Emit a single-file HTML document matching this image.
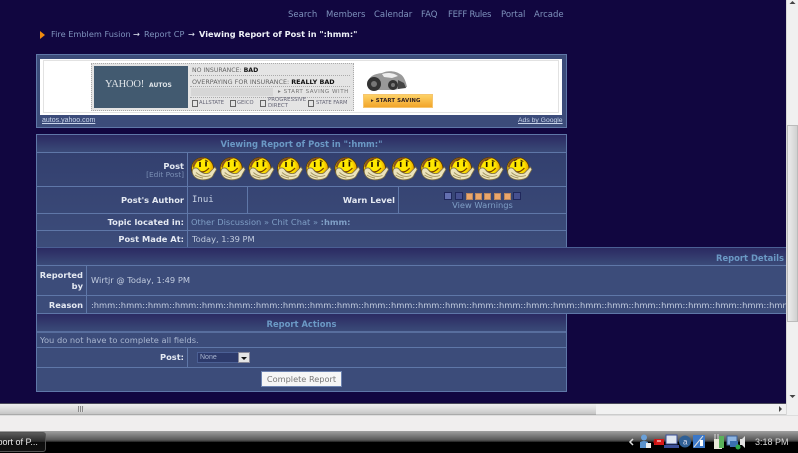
<!DOCTYPE html>
<html><head><meta charset="utf-8">
<style>
html,body{margin:0;padding:0;width:798px;height:453px;overflow:hidden;background:#110640}
body{position:relative;font-family:"DejaVu Sans","Liberation Sans",sans-serif;font-size:8px;color:#c9d3e6}
div{position:absolute;white-space:nowrap;box-sizing:border-box}
.nav{top:10px;font-size:8.500px;color:#7f93bd;line-height:11px}
.bc{top:29px;font-size:8.200px;color:#7f93bd;line-height:11px}
.band{background:linear-gradient(#2b2a62,#3a4a78)}
.cell{background:linear-gradient(#33406f,#3c4c7a)}
.line{background:#5f77a8}
.lab{font-weight:bold;color:#e4e9f2;text-align:right;font-size:8.300px;line-height:11px}
.txt{line-height:11px;font-size:8.300px;color:#c3cde0}
.link{color:#7f9fc6}
.pip{width:7px;height:7px;background:#eba66a;border:1px solid #b9875e;top:193px}
.pb{width:8px;height:8px;background:#46508f;border:1px solid #20285c;top:192px}
.ad{font-size:6.200px;color:#666;line-height:8px}
.sm{font-size:5.200px;color:#667;line-height:7px}
.box{width:6px;height:7px;border:1px solid #666;top:100px}
</style></head>
<body>
<svg width="0" height="0" style="position:absolute"><defs>
<radialGradient id="g" cx=".45" cy=".4" r=".6"><stop offset=".55" stop-color="#ffe800"/><stop offset=".9" stop-color="#e8a400"/><stop offset="1" stop-color="#b87000"/></radialGradient>
<symbol id="s" viewBox="0 0 26 24">
<circle cx="11.500" cy="11.500" r="11" fill="url(#g)" stroke="#5c3c00" stroke-width=".8"/>
<path d="M1.500 10C2 4 7 .5 13 .6 16 1 12 2 8 3.500 5 5 4 8 3 11Z" fill="#8a5420"/>
<path d="M9 5v5M15 4.500v5" stroke="#1a1000" stroke-width="1.600"/>
<path d="M7.500 4l3-1.500M14 3l3 1.500" stroke="#4a2c00" stroke-width=".9"/>
<path d="M8 13C10 16 14 15.500 18 11" fill="none" stroke="#7a4000" stroke-width="1.300"/>
<path d="M1.500 13C3 10 6.500 10.500 8 13 10 16 15 17.500 18 16L24 10 25.500 12.500 22.500 17.500C21.500 22 14 23.500 9 22.500 3.500 21.500 .5 17 1.500 13Z" fill="#ece3bb" stroke="#7d7048" stroke-width=".8"/>
<path d="M5 15.500C9 19 14 20.500 19.500 18.500M4 18C7 20 9 20.500 12 21" fill="none" stroke="#a0925e" stroke-width=".9"/>
</symbol></defs></svg>

<!-- top nav -->
<div class="nav" style="left:288px">Search</div>
<div class="nav" style="left:326px">Members</div>
<div class="nav" style="left:374px">Calendar</div>
<div class="nav" style="left:421px">FAQ</div>
<div class="nav" style="left:448px;letter-spacing:-.25px">FEFF Rules</div>
<div class="nav" style="left:501px">Portal</div>
<div class="nav" style="left:534px">Arcade</div>

<!-- breadcrumb -->
<svg style="position:absolute;left:40px;top:30px" width="6" height="10"><path d="M0 1l5 4-5 4z" fill="#f08a10"/></svg>
<div class="bc" style="left:51px">Fire Emblem Fusion</div>
<div class="bc" style="left:133px;color:#dfe5f0">→</div>
<div class="bc" style="left:144px">Report CP</div>
<div class="bc" style="left:188px;color:#dfe5f0">→</div>
<div class="bc" style="left:199px;color:#eef1f7;font-weight:bold">Viewing Report of Post in ":hmm:"</div>

<!-- ad box -->
<div style="left:36px;top:54px;width:531px;height:74px;background:#3c4c7a;border:1px solid #5f77a8"></div>
<div style="left:40px;top:59px;width:522px;height:56px;background:#fff"></div>
<div style="left:43px;top:60px;width:516px;height:53px;border:1px solid #e2e2e2"></div>
<div style="left:91px;top:63px;width:263px;height:48px;background:#e4e4e4;border:1px dotted #aaa"></div>
<div style="left:94px;top:66px;width:94px;height:42px;background:#425a70"></div>
<div style="left:105px;top:79px;font-family:'Liberation Serif',serif;font-size:10.500px;line-height:12px;color:#dfe4e8;letter-spacing:-.2px">YAHOO!</div>
<div style="left:149px;top:82px;font-size:6px;line-height:8px;font-weight:bold;color:#dfe4e8">AUTOS</div>
<div class="ad" style="left:192px;top:67px">NO INSURANCE: <b style="color:#111">BAD</b></div>
<div style="left:190px;top:75px;width:160px;height:1px;border-top:1px dotted #aaa"></div>
<div class="ad" style="left:192px;top:78px;font-size:6.400px">OVERPAYING FOR INSURANCE: <b style="color:#111">REALLY BAD</b></div>
<div style="left:190px;top:86px;width:160px;height:1px;border-top:1px dotted #aaa"></div>
<div style="left:191px;top:88px;width:82px;height:8px;background:#d6d6d6"></div>
<div class="sm" style="left:278px;top:89px;letter-spacing:.5px;font-size:5.600px;color:#777">▸ START SAVING WITH</div>
<div style="left:190px;top:97px;width:160px;height:1px;border-top:1px dotted #aaa"></div>
<div class="box" style="left:192px"></div>
<div class="sm" style="left:199px;top:100px">ALLSTATE</div>
<div class="box" style="left:230px"></div>
<div class="sm" style="left:237px;top:100px">GEICO</div>
<div class="box" style="left:260px"></div>
<div class="sm" style="left:268px;top:98px;line-height:5.500px;font-size:5.400px">PROGRESSIVE<br>DIRECT</div>
<div class="box" style="left:308px"></div>
<div class="sm" style="left:316px;top:100px">STATE FARM</div>
<svg style="position:absolute;left:364px;top:68px" width="44" height="24">
<path d="M4 15C5 8 10 6 18 5 24 2 32 3 36 6 40 8 42 14 43 19L30 22H8Z" fill="#999"/>
<path d="M18 6C24 4 30 5 34 8L28 10 20 9Z" fill="#eee"/>
<circle cx="10" cy="16" r="7" fill="#333"/><circle cx="10" cy="16" r="3" fill="#777"/>
<circle cx="29" cy="17" r="5" fill="#333"/><circle cx="29" cy="17" r="2" fill="#777"/>
<path d="M34 12l6 3 2 5-8 1z" fill="#444"/></svg>
<div style="left:363px;top:94px;width:70px;height:14px;background:linear-gradient(#fdd267,#f2a52b);border:1px solid #f6c56f"></div>
<div class="ad" style="left:371px;top:97px;font-weight:bold;color:#322;letter-spacing:.1px;font-size:5.400px">▸ START SAVING</div>
<div style="left:42px;top:116px;font-size:7px;line-height:10px;color:#c8d4ea;text-decoration:underline;font-family:'Liberation Sans',sans-serif">autos.yahoo.com</div>
<div style="left:518px;top:116px;font-size:6.800px;line-height:10px;color:#c8d4ea;text-decoration:underline;font-family:'Liberation Sans',sans-serif">Ads by Google</div>

<!-- main table frame -->
<div style="left:36px;top:134px;width:531px;height:258px;background:#3c4c7a;border:1px solid #5f77a8"></div>
<div class="band" style="left:37px;top:135px;width:529px;height:17px"></div>
<div style="left:37px;top:138px;width:529px;text-align:center;font-weight:bold;font-size:8.400px;line-height:12px;color:#6b99c5">Viewing Report of Post in ":hmm:"</div>
<div class="cell" style="left:37px;top:153px;width:529px;height:94px"></div>
<div class="line" style="left:37px;top:152px;width:529px;height:1px"></div>
<div class="line" style="left:37px;top:186px;width:529px;height:1px"></div>
<div class="line" style="left:37px;top:213px;width:529px;height:1px"></div>
<div class="line" style="left:37px;top:230px;width:529px;height:1px"></div>
<div class="line" style="left:37px;top:247px;width:529px;height:1px"></div>
<div class="line" style="left:187px;top:153px;width:1px;height:95px"></div>
<div class="line" style="left:247px;top:186px;width:1px;height:27px"></div>
<div class="line" style="left:398px;top:186px;width:1px;height:27px"></div>

<div class="lab" style="left:100px;width:84px;top:161px">Post</div>
<div style="left:100px;width:84px;top:170px;text-align:right;font-size:7.400px;line-height:9px;color:#7b8fb5">[Edit Post]</div>
<svg style="position:absolute;left:191px;top:157px" width="346" height="26">
<use href="#s" x="0" width="26" height="24"/><use href="#s" x="28.700" width="26" height="24"/><use href="#s" x="57.400" width="26" height="24"/><use href="#s" x="86" width="26" height="24"/><use href="#s" x="114.700" width="26" height="24"/><use href="#s" x="143.400" width="26" height="24"/><use href="#s" x="172" width="26" height="24"/><use href="#s" x="200.700" width="26" height="24"/><use href="#s" x="229.400" width="26" height="24"/><use href="#s" x="258" width="26" height="24"/><use href="#s" x="286.700" width="26" height="24"/><use href="#s" x="315.400" width="26" height="24"/>
</svg>

<div class="lab" style="left:100px;width:84px;top:195px">Post's Author</div>
<div style="left:192px;top:195px;line-height:11px;font-size:9px;font-family:'DejaVu Sans Mono',monospace;color:#c9d3e6">Inui</div>
<div class="lab" style="left:300px;width:95px;top:195px">Warn Level</div>
<div class="pb" style="left:444px;background:#6470b0"></div>
<div class="pb" style="left:455px"></div>
<div class="pip" style="left:466px"></div><div class="pip" style="left:475px"></div><div class="pip" style="left:484px"></div><div class="pip" style="left:494px"></div><div class="pip" style="left:504px"></div>
<div class="pb" style="left:513px"></div>
<div style="left:399px;width:167px;top:200px;text-align:center;line-height:11px;font-size:8.300px;color:#7f9fc6">View Warnings</div>

<div class="lab" style="left:100px;width:84px;top:217px">Topic located in:</div>
<div class="txt link" style="left:191px;top:217px">Other Discussion » Chit Chat » <b>:hmm:</b></div>
<div class="lab" style="left:100px;width:84px;top:234px">Post Made At:</div>
<div class="txt" style="left:192px;top:234px">Today, 1:39 PM</div>

<!-- report details -->
<div style="left:36px;top:247px;width:750px;height:67px;background:#3c4c7a;border-top:1px solid #4b5f94;border-left:1px solid #5f77a8"></div>
<div class="band" style="left:37px;top:248px;width:749px;height:17px"></div>
<div style="left:600px;width:184px;top:252px;text-align:right;font-weight:bold;font-size:8.400px;line-height:12px;color:#6b99c5">Report Details</div>
<div class="line" style="left:37px;top:265px;width:749px;height:1px"></div>
<div class="line" style="left:37px;top:295px;width:749px;height:1px"></div>
<div class="line" style="left:37px;top:313px;width:749px;height:1px"></div>
<div class="line" style="left:86px;top:266px;width:1px;height:47px"></div>
<div class="lab" style="left:38px;width:45px;top:270px">Reported<br>by</div>
<div class="txt" style="left:91px;top:275px">Wirtjr @ Today, 1:49 PM</div>
<div class="lab" style="left:38px;width:45px;top:300px">Reason</div>
<div class="txt" style="left:91px;top:300px;width:695px;overflow:hidden">:hmm::hmm::hmm::hmm::hmm::hmm::hmm::hmm::hmm::hmm::hmm::hmm::hmm::hmm::hmm::hmm::hmm::hmm::hmm::hmm::hmm::hmm::hmm::hmm::hmm::hmm::hmm::hmm::hmm::hmm:</div>

<!-- report actions -->
<div class="band" style="left:37px;top:314px;width:529px;height:17px"></div>
<div style="left:37px;top:318px;width:529px;text-align:center;font-weight:bold;font-size:8.400px;line-height:12px;color:#6b99c5">Report Actions</div>
<div class="line" style="left:37px;top:331px;width:529px;height:2px;opacity:.8"></div>
<div class="txt" style="left:40px;top:335px;color:#a9b6d0">You do not have to complete all fields.</div>
<div class="line" style="left:37px;top:347px;width:529px;height:1px"></div>
<div class="line" style="left:37px;top:367px;width:529px;height:1px"></div>
<div class="line" style="left:187px;top:348px;width:1px;height:19px"></div>
<div class="lab" style="left:100px;width:84px;top:352px">Post:</div>
<div style="left:197px;top:352px;width:53px;height:11px;background:#2d3a6b;border:1px solid #4b5f94"></div>
<div style="left:200px;top:353px;font-size:7px;line-height:9px;color:#a9b6d0;font-family:'Liberation Sans',sans-serif">None</div>
<div style="left:238px;top:352px;width:12px;height:11px;background:#e4e4e4;border:1px solid #8a8a9a"></div>
<div style="left:241px;top:357px;width:0;height:0;border:3px solid transparent;border-top:3px solid #111;border-bottom:0"></div>
<div style="left:261px;top:371px;width:81px;height:16px;background:#f6f6f6;border:1px solid #6d83b0;text-align:center;line-height:14px;font-size:8.200px;color:#777">Complete Report</div>

<!-- horizontal scrollbar -->
<div style="left:0;top:403px;width:786px;height:12px;background:linear-gradient(#eee,#dcdcdc 50%,#c6c6c6);border-top:1px solid #4a4a5a;border-bottom:1px solid #aaa"></div>
<div style="left:78px;top:406px;width:6px;height:6px;background:repeating-linear-gradient(90deg,#888 0 1px,#ddd 1px 2px)"></div>
<div style="left:596px;top:404px;width:190px;height:11px;background:#f1f1f1;border-bottom:1px solid #ccc"></div>
<svg style="position:absolute;left:778px;top:405px" width="6" height="8"><path d="M1 1l3 3-3 3z" fill="#444"/></svg>

<!-- vertical scrollbar -->
<div style="left:786px;top:0;width:12px;height:415px;background:#f0f0f0;border-left:1px solid #d8d8d8"></div>
<div style="left:787px;top:125px;width:11px;height:197px;background:linear-gradient(90deg,#ececec,#d0d0d0);border:1px solid #bbb"></div>
<svg style="position:absolute;left:788px;top:0" width="9" height="6"><path d="M4.500 1l3 3h-6z" fill="#444"/></svg>
<svg style="position:absolute;left:788px;top:394px" width="9" height="6"><path d="M1.500 1h6l-3 3z" fill="#444"/></svg>

<!-- status bar -->
<div style="left:0;top:415px;width:798px;height:16px;background:#f0eeee;border-top:1px solid #ddd"></div>

<!-- taskbar -->
<div style="left:0;top:431px;width:798px;height:22px;background:linear-gradient(#a0a0a0,#5a5a5a 40%,#333 48%,#000 50%,#000)"></div>
<div style="left:-5px;top:432px;width:51px;height:20px;background:linear-gradient(#5a5a5a,#2a2a2a 48%,#0c0c0c 50%,#111);border:1px solid #555;border-radius:3px"></div>
<div style="left:0;top:436px;width:46px;overflow:hidden;font-size:9px;line-height:12px;color:#e8e8e8;font-family:'Liberation Sans',sans-serif;text-indent:-14px">Report of P...</div>

<!-- tray icons -->
<svg style="position:absolute;left:626px;top:433px" width="125" height="18">
<path d="M7 6l-3 3 3 3" fill="none" stroke="#ddd" stroke-width="1.500"/>
<circle cx="18" cy="4.500" r="3" fill="#6aa0d8"/><path d="M14 15V9q4-2 8 0v6z" fill="#5c92cc"/><rect x="20" y="10" width="5" height="5" fill="#eee"/>
<path d="M28 6h10v6H28z" fill="#d81818"/><path d="M27 9l3-3v6z" fill="#c01010"/><path d="M31 8h4" stroke="#fff"/>
<rect x="40" y="2" width="11" height="9" fill="#dfe6f2" stroke="#3a4f9a"/><rect x="38" y="12" width="15" height="3" fill="#3a4f9a"/>
<circle cx="59" cy="8.500" r="6" fill="#2f5f95"/><text x="57" y="11.500" font-size="8" fill="#dde" font-family="Liberation Sans">a</text>
<rect x="67" y="2" width="12" height="13" fill="#3c78c8"/><path d="M68 14l9-11" stroke="#ddd"/><rect x="74" y="7" width="3" height="6" fill="#fff"/>
<rect x="88" y="6" width="8" height="10" fill="#e8e8d8"/><rect x="93" y="3" width="5" height="12" fill="#5ab05a"/><path d="M89 1v5M92 1v5" stroke="#ddd"/>
<rect x="101" y="3" width="10" height="9" fill="#8db4e0" stroke="#3a5f99"/><rect x="104" y="8" width="8" height="6" fill="#3a6fb0"/><circle cx="112" cy="14" r="2.500" fill="#2fa84a"/>
<path d="M114 6h2l3-3v12l-3-3h-2z" fill="#e0e0e0"/>
</svg>
<div style="left:755px;top:436px;font-size:9px;line-height:12px;color:#d8d8d8;font-family:'Liberation Sans',sans-serif">3:18 PM</div>
</body></html>
